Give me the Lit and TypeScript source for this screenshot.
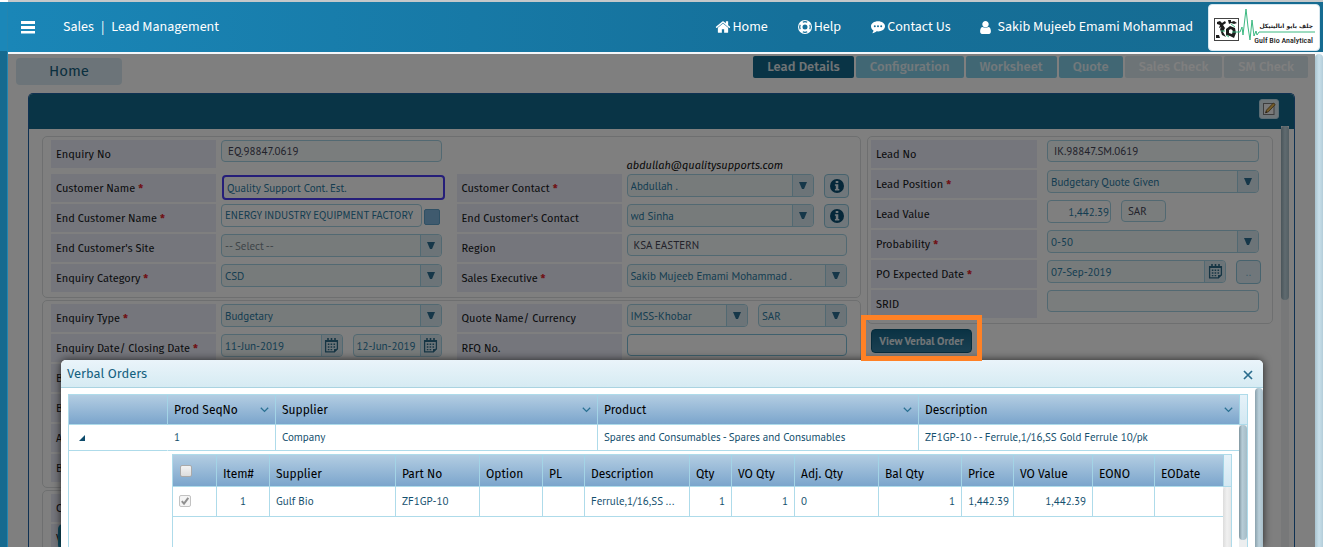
import { LitElement, html, css, nothing } from "lit";
import { customElement } from "lit/decorators.js";
import { classMap } from "lit/directives/class-map.js";

const icons = {
  home: html`<svg class="ico" viewBox="0 0 1792 1792" width="16" height="16" aria-hidden="true"><path fill="currentColor" d="M1472 992v480q0 26-19 45t-45 19h-384v-384h-256v384h-384q-26 0-45-19t-19-45v-480q0-1 .5-3t.5-3l575-474 575 474q1 2 1 6zm223-69l-62 74q-8 9-21 11h-3q-13 0-21-7l-692-577-692 577q-12 8-24 7-13-2-21-11l-62-74q-8-10-7-23.500t11-21.500l719-599q32-26 76-26t76 26l244 204v-195q0-14 9-23t23-9h192q14 0 23 9t9 23v408l219 182q10 8 11 21.500t-7 23.500z"/></svg>`,
  help: html`<svg class="ico" viewBox="0 0 16 16" width="16" height="16" aria-hidden="true"><path fill="currentColor" fill-rule="evenodd" d="M8 1a7 7 0 1 0 0 14A7 7 0 0 0 8 1zm0 4.500a2.500 2.500 0 1 1 0 5 2.500 2.500 0 0 1 0-5z"/><g fill="none" stroke="#14709a" stroke-width="1.200"><path d="M5.800 3.200a5.200 5.200 0 0 1 4.400 0M5.800 12.800a5.200 5.200 0 0 0 4.400 0M3.200 5.800a5.200 5.200 0 0 0 0 4.400M12.800 5.800a5.200 5.200 0 0 1 0 4.400"/></g></svg>`,
  chat: html`<svg class="ico" viewBox="0 0 16 16" width="16" height="16" aria-hidden="true"><path fill="currentColor" d="M8 2.200c4 0 7 2.200 7 5.100s-3 5.100-7 5.100c-.5 0-1 0-1.400-.1-1.200 1.100-2.700 1.800-4.400 1.900.7-.7 1.200-1.600 1.300-2.700C2 10.600 1 9.100 1 7.300c0-2.900 3-5.100 7-5.100z"/><g fill="#14709a"><circle cx="4.800" cy="7.300" r="1"/><circle cx="8" cy="7.300" r="1"/><circle cx="11.200" cy="7.300" r="1"/></g></svg>`,
  user: html`<svg class="ico" viewBox="0 0 1280 1792" width="11" height="15" aria-hidden="true"><path fill="currentColor" d="M1280 1399q0 109-62.500 187t-150.500 78h-854q-88 0-150.500-78t-62.500-187q0-85 8.500-160.500t31.500-152 58.500-131 94-89 134.500-34.500q131 128 313 128t313-128q76 0 134.500 34.500t94 89 58.500 131 31.500 152 8.500 160.500zm-256-887q0 159-112.500 271.500t-271.500 112.500-271.500-112.500-112.500-271.500 112.500-271.500 271.500-112.500 271.500 112.500 112.500 271.500z"/></svg>`,
  bars: html`<svg class="ico" viewBox="0 0 14 13" width="14" height="13" aria-hidden="true"><path fill="currentColor" d="M0 0h14v3H0zM0 5h14v3H0zM0 10h14v2.500H0z"/></svg>`,
  info: html`<svg viewBox="0 0 14 14" width="14" height="14" aria-hidden="true"><circle cx="7" cy="7" r="7" fill="#0b4f72"/><path fill="#e4f1f8" d="M5.700 2h2.600v2.100H5.700zM4.900 5.300h3.400v4.800h1v1.500H4.900v-1.500h.9V6.800h-.9z"/></svg>`,
  calendar: html`<svg viewBox="0 0 15 15" width="15" height="15" aria-hidden="true"><path fill="none" stroke="#2c6a88" stroke-width="1.300" d="M1.600 2.600h11.800v8.200l-3 3H1.600z"/><path fill="#2c6a88" d="M1 2h13v2H1zM3.200 0h1.600v3H3.200zM6.700 0h1.600v3H6.700zM10.200 0h1.600v3h-1.600zM3.800 5.500h1.600v1.600H3.800zM6.600 5.500h1.600v1.600H6.600zM9.500 5.500h1.600v1.600H9.500zM3.800 8.200h1.600v1.600H3.800zM6.600 8.200h1.600v1.600H6.600zM9.500 8.200h1.600v1.600H9.500zM3.800 10.900h1.600v1.400H3.800zM6.600 10.900h1.600v1.400H6.600zM10 14.200v-3.200h4z"/></svg>`,
  arrow: html`<svg viewBox="0 0 8 7" width="8" height="7" aria-hidden="true"><path fill="#2c6f92" d="M0 0h8L5 7H3z"/></svg>`,
  chevron: html`<svg viewBox="0 0 9 6" width="9" height="6" aria-hidden="true"><path fill="none" stroke="#2a7193" stroke-width="1.300" d="M.8.8l3.700 3.600L8.200.8"/></svg>`,
  close: html`<svg viewBox="0 0 10 10" width="10" height="10" aria-hidden="true"><path stroke="#2a6c8d" stroke-width="1.700" d="M1 1l8 8M9 1L1 9"/></svg>`,
  edit: html`<svg viewBox="0 0 14 14" width="14" height="14" aria-hidden="true"><rect x="1.500" y="1.500" width="10.500" height="11" fill="#f4f4f4" stroke="#7b7b7b"/><path d="M3.500 10.800l1-2.700L11.300 1l1.900 1.600-6.800 7.200z" fill="#e8b850" stroke="#6b5228" stroke-width=".8"/><path d="M3.500 10.800l.6-1.500 1 .9z" fill="#222"/></svg>`,
};

@customElement("brand-logo")
export class BrandLogo extends LitElement {
  static styles = css`
    :host { display: block; width: 112px; height: 47px; background: #fff; border: 1px solid #d5e6ee; border-radius: 4px; box-sizing: border-box; }
    svg { display: block; width: 110px; height: 45px; }
    .en { font: 500 8px "Roboto Condensed", "Liberation Sans", sans-serif; fill: #222; }
    .ar { font: 700 6px "DejaVu Sans", sans-serif; fill: #222; }
  `;
  render() {
    return html`<svg viewBox="0 0 110 45" role="img" aria-label="Gulf Bio Analytical">
      <rect x="5.500" y="13.500" width="24" height="22" fill="#fff" stroke="#444"/>
      <path fill="#1c1c1c" d="M8 17l3-1 2 2 3-2 1 2-3 2-1 2-3 1 1-3-3-1zM19 15h3v2l3-1 3 2-3 1-3-1-2 1zM11 24l3-4 2 3-2 4 3 5-4-2zM17 24l4-3 5 2 1 5-2 5-4-2-4-1zM7 30l3 0 1 3H7z"/>
      <path fill="#fff" d="M20 25l2-1 2 2-1 3-3-1z"/>
      <path fill="none" stroke="#3db982" d="M12 26h4M22 19l4 3M17 30l3 2M23 27h8l2-5 1 8 3-26 2 18 2 13 2-20 2 16 2-5 1 4 2-3h56"/>
      <text class="ar" x="104" y="23" text-anchor="end">جلف بايو اناليتيكل</text>
      <text class="en" x="104" y="38" text-anchor="end">Gulf Bio Analytical</text>
    </svg>`;
  }
}

type Col = { t: string; w: number; sort?: boolean; num?: boolean };

const ORDER_COLS: Col[] = [
  { t: "", w: 98 },
  { t: "Prod SeqNo", w: 108, sort: true },
  { t: "Supplier", w: 322, sort: true },
  { t: "Product", w: 321, sort: true },
  { t: "Description", w: 321, sort: true },
];

const ITEM_COLS: Col[] = [
  { t: "Item#", w: 53 }, { t: "Supplier", w: 126 }, { t: "Part No", w: 84 },
  { t: "Option", w: 63 }, { t: "PL", w: 42 }, { t: "Description", w: 105 },
  { t: "Qty", w: 42, num: true }, { t: "VO Qty", w: 63, num: true }, { t: "Adj. Qty", w: 84 },
  { t: "Bal Qty", w: 83, num: true }, { t: "Price", w: 52, num: true }, { t: "VO Value", w: 79, num: true },
  { t: "EONO", w: 62 }, { t: "EODate", w: 69 },
];

const ITEM = ["1", "Gulf Bio", "ZF1GP-10", "", "", "Ferrule,1/16,SS ...", "1", "1", "0", "1", "1,442.39", "1,442.39", "", ""];

@customElement("verbal-orders")
export class VerbalOrders extends LitElement {
  static styles = css`
    :host { display: flex; flex-direction: column; background: #fff; border-radius: 5px 5px 0 0; box-shadow: 0 0 8px rgba(0, 0, 0, .7); overflow: hidden; font: 11px/14px "PT Sans", "Lato", sans-serif; color: #14506e; }
    * { box-sizing: border-box; }
    .title { flex: none; display: flex; align-items: center; justify-content: space-between; height: 28px; padding: 0 10px 0 6px; background: linear-gradient(#eaf4fa, #d6ebf3); border-bottom: 1px solid #a9d3e1; }
    h2 { margin: 0; font: 400 13px/16px "Fira Sans", "Lato", sans-serif; color: #14607f; }
    button { border: 0; padding: 0; background: none; display: inline-flex; align-items: center; }
    .close { margin-top: 3px; }
    .body { flex: 1; display: flex; gap: 7px; padding-left: 7px; }
    .grid { flex: 1; display: flex; border: 1px solid #aedbea; border-width: 1px 0 0 1px; }
    .outer { margin-top: 6px; }
    table { flex: 1; width: 100%; table-layout: fixed; border-spacing: 0; align-self: flex-start; }
    th { height: 30px; padding: 0 6px; text-align: left; font: 400 12px/14px "Fira Sans", "Lato", sans-serif; color: #000; background: linear-gradient(#b3cde2, #7ba5cc); border-bottom: 1px solid #aedbea; white-space: nowrap; }
    th + th { border-left: 1px solid #a3d4e6; }
    .head { display: flex; justify-content: space-between; align-items: center; }
    td { height: 26px; padding: 0 6px 2px; border-bottom: 1px solid #aedbea; white-space: nowrap; overflow: hidden; }
    td + td { border-left: 1px solid #aedbea; }
    .outer > table > tbody > tr > .seq { border-left-color: transparent; }
    .toggle { margin-left: 4px; }
    .detail { height: auto; padding: 3px 7px 0 103px; border: 0; overflow: visible; vertical-align: top; }
    .inner { height: 120px; }
    .inner th { height: 32px; padding: 7px 6px 0; }
    .inner td { height: 30px; }
    .inner .num { text-align: right; }
    .inner .item { text-align: center; }
    .inner .tight { padding-right: 4px; }
    .rail { width: 9px; flex: none; display: flex; flex-direction: column; border-right: 1px solid #aedbea; background: #eceeef; }
    .cap { height: 30px; background: linear-gradient(#e6f2f9, #d3e8f2); border-left: 1px solid #a3d4e6; border-bottom: 1px solid #aedbea; }
    .inner .cap { height: 32px; }
    .thumb { height: 115px; border-radius: 4px; background: linear-gradient(90deg, #7f959f, #b7cdd7 40%, #a5bcc6); }
    .idle { flex: 1; border-radius: 4px 4px 0 0; background: linear-gradient(90deg, #dcdcdc, #f0f0f0 50%, #e6e6e6); }
    .page-thumb { width: 8px; flex: none; border-radius: 4px 4px 0 0; background: linear-gradient(90deg, #8ba2ad, #bacfd9 50%, #a9bfca); }
    input { appearance: none; display: block; width: 12px; height: 12px; margin: 0 0 0 1px; border: 1px solid #aaa; border-radius: 2px; background: linear-gradient(#f3f3f3, #ddd); }
    th input { margin-top: -6px; }
    input:checked { margin-left: 0; border-color: #c2c2c2; background: #f4f4f4 url("data:image/svg+xml,%3Csvg xmlns='http://www.w3.org/2000/svg' viewBox='0 0 10 10'%3E%3Cpath d='M1.800 5.200l2.200 2.500L8.300 1.800' fill='none' stroke='%23909090' stroke-width='2'/%3E%3C/svg%3E"); }
  `;
  cols(list: Col[]) {
    const sum = list.reduce((a, c) => a + c.w, 0);
    return html`<colgroup>${list.map((c) => html`<col style="width:${(c.w / sum) * 100}%">`)}</colgroup>`;
  }
  render() {
    return html`
      <div class="title"><h2>Verbal Orders</h2><button class="close" aria-label="Close">${icons.close}</button></div>
      <div class="body">
        <div class="grid outer">
          <table>
            ${this.cols(ORDER_COLS)}
            <thead><tr>${ORDER_COLS.map((c) => html`<th><div class="head">${c.t}${c.sort ? icons.chevron : nothing}</div></th>`)}</tr></thead>
            <tbody>
              <tr>
                <td><button class="toggle" aria-label="Collapse row"><svg viewBox="0 0 6 6" width="6" height="6"><path fill="#0d4a6b" d="M6 0v6H0z"/></svg></button></td>
                <td class="seq">1</td>
                <td>Company</td>
                <td>Spares and Consumables - Spares and Consumables</td>
                <td>ZF1GP-10 - - Ferrule,1/16,SS Gold Ferrule 10/pk</td>
              </tr>
              <tr><td class="detail" colspan="5">${this.items()}</td></tr>
            </tbody>
          </table>
          <div class="rail"><div class="cap"></div><div class="thumb"></div></div>
        </div>
        <div class="page-thumb"></div>
      </div>`;
  }
  items() {
    return html`<div class="grid inner">
      <table>
        ${this.cols([{ t: "", w: 43 }, ...ITEM_COLS])}
        <thead><tr><th><input type="checkbox" aria-label="Select all"></th>${ITEM_COLS.map((c) => html`<th>${c.t}</th>`)}</tr></thead>
        <tbody><tr><td><input type="checkbox" checked disabled aria-label="Select item 1"></td>
          ${ITEM.map((v, i) => html`<td class=${classMap({ num: !!ITEM_COLS[i].num, item: i === 0, tight: ITEM_COLS[i].t === "Price" })}>${v}</td>`)}</tr></tbody>
      </table>
      <div class="rail"><div class="cap"></div><div class="idle"></div></div>
    </div>`;
  }
}

@customElement("app-root")
export class AppRoot extends LitElement {
  static styles = css`
    :host { display: flex; position: relative; height: 100vh; overflow: hidden; background: #fff; font: 11px/14px "PT Sans", "Lato", sans-serif; color: #2b7ba3; }
    * { box-sizing: border-box; }
    button { font: inherit; padding: 0; cursor: pointer; }
    .side { width: 8px; flex: none; margin-top: 2px; background: #166a8f; border-right: 1px solid #2385b0; }
    .side::before { content: ""; display: block; height: 49px; background: #1b87b8; }
    .page { flex: 1; min-width: 0; display: flex; flex-direction: column; }
    header { flex: none; display: flex; align-items: center; height: 54px; padding: 0 3px 0 13px; border-top: 2px solid #c4c8ca; border-bottom: 2px solid #f4f7fa; background: linear-gradient(90deg, #1a86b7, #15709a 60%, #166b91); color: #fff; font: 400 14px/18px "Source Sans 3", "Open Sans", sans-serif; }
    header a { color: inherit; text-decoration: none; display: inline-flex; align-items: center; gap: 1px; }
    .menu { display: inline-flex; border: 0; background: none; color: #fff; margin-right: 28px; }
    .crumb { display: flex; gap: 7px; flex: 1; }
    nav.top { display: flex; gap: 29px; align-items: center; margin-right: 15px; }
    nav.top .who { gap: 7px; }
    .ico { display: block; flex: none; }
    .below { flex: 1; min-height: 0; display: flex; }
    main { flex: 1; min-width: 0; display: flex; flex-direction: column; }
    .shade { position: absolute; inset: 54px 8px 0 8px; background: rgba(0, 0, 0, .5); z-index: 2; }
    .win-rail { width: 8px; flex: none; border-radius: 4px 4px 0 0; background: linear-gradient(90deg, #a9c4d0, #c8dfea 50%, #b3cdd9); }
    .tabs { flex: none; display: flex; justify-content: space-between; align-items: flex-start; height: 39px; padding: 2px 7px 0 8px; }
    .home { display: block; width: 106px; height: 27px; margin-top: 2px; border-radius: 4px; background: #d9e9f2; color: #17607f; text-decoration: none; text-align: center; font: 400 15px/27px "Fira Sans", "Lato", sans-serif; }
    .steps { display: flex; gap: 2px; }
    .steps button { height: 22px; padding: 0 14px; border: 0; border-radius: 2px; background: #83cfe9; color: #e6f2f7; font: 500 13px/22px "Fira Sans", "Lato", sans-serif; }
    .steps .on { background: #12688c; color: #e2e9ec; }
    .steps .off { background: #dbe8ee; color: #fff; }
    .panel { flex: 1; min-height: 0; margin: 0 20px; border: 1px solid #1f62a4; border-bottom: 0; border-radius: 5px 5px 0 0; display: flex; flex-direction: column; }
    .panel-head { flex: none; height: 35px; padding: 5px 15px 0; display: flex; justify-content: flex-end; align-items: flex-start; background: #12688c; border-radius: 4px 4px 0 0; }
    .edit { width: 20px; height: 20px; display: grid; place-items: center; border: 1px solid #b8dbe9; border-radius: 3px; background: #dcecf3; }
    .panel-body { flex: 1; min-height: 0; display: flex; padding: 0 5px 0 13px; }
    .form { flex: 1; min-width: 0; display: grid; grid-template-columns: 819fr 406fr; gap: 6px; align-items: start; padding-top: 7px; margin-right: 8px; }
    .rail { width: 8px; flex: none; margin-top: -3px; background: #eef1f3; }
    .rail div { height: 174px; border-radius: 4px; background: linear-gradient(90deg, #93aab5, #c0d5df 50%, #a7bdc8); }
    .stack { display: flex; flex-direction: column; gap: 2px; min-width: 0; }
    .box { border: 1px solid #dcdfe0; border-radius: 5px; padding: 3px 13px 5px 8px; display: grid; grid-template-columns: 1fr 1fr; gap: 15px; }
    .box.one { grid-template-columns: 1fr; padding-left: 3px; }
    .row { display: grid; grid-template-columns: 165px minmax(0, 1fr); gap: 5px; height: 28px; }
    .one .row { grid-template-columns: 166px minmax(0, 1fr); gap: 10px; }
    .row > label { display: block; background: #ebecf9; padding: 7px 5px 0; color: #16191b; font: 400 11px/16px "Fira Sans", "Lato", sans-serif; white-space: nowrap; }
    .row b { color: #e0252c; }
    .first { margin-bottom: 4px; }
    .mail { height: 32px; padding: 18px 0 0 170px; color: #111; font: italic 400 11px/16px "Fira Sans", "Lato", sans-serif; }
    .ctl { display: flex; align-items: flex-start; gap: 10px; min-width: 0; }
    input, select { width: 100%; min-width: 0; flex: 1; height: 22px; margin: 0; padding: 0 3px; border: 1px solid #a5d3e4; border-radius: 4px; background: #fff; color: inherit; font: inherit; outline: 0; }
    select { padding: 0; }
    .ro { background: #f4fafb; color: #445; padding: 0 6px; }
    .focus { flex: none; width: calc(100% + 2px); height: 25px; margin: 1px -3px 0 1px; border: 2px solid #4a3df2; }
    .long { font-family: "Source Sans 3", "PT Sans", sans-serif; height: 23px; }
    .blank { border-color: #7fc0da; }
    .narrow { flex: 0 0 64px; text-align: right; padding: 0 1px; height: 23px; }
    .cur { flex: 0 0 45px; }
    .combo { flex: 1; min-width: 0; height: 23px; display: grid; grid-template-columns: minmax(0, 1fr) 21px; border: 1px solid #a5d3e4; border-radius: 4px; background: #eef6f7; overflow: hidden; }
    .combo > select { grid-area: 1 / 1 / 2 / 3; appearance: none; border: 0; height: 21px; background: none; opacity: 1; padding: 0 22px 0 3px; }
    .combo > input { border: 0; height: 21px; background: none; padding-right: 0; }
    .cap { display: grid; place-items: center; border: 0; border-left: 1px solid #a5d3e4; background: #d8e9f1; pointer-events: none; }
    .combo > .cap { grid-area: 1 / 2; }
    .w88 { flex: 0 0 89px; }
    .muted { color: #7d8b91; }
    .square { flex: none; width: 25px; height: 24px; margin-right: -2px; display: grid; place-items: center; border: 1px solid #8ec6dd; border-radius: 4px; background: #e0eff6; color: #7fbcd6; }
    .pick { flex: none; width: 16px; height: 16px; margin: 5px 2px 0 -8px; border: 1px solid #5fa0c9; border-radius: 2px; background: #7fb4dc; }
    .tail { position: relative; }
    .tail button { position: absolute; left: 7px; top: 0; width: 90px; height: 26px; border: 0; border-radius: 5px; background: #1c93b8; }
    .action { position: relative; align-self: flex-start; margin: 3px 0 0 4px; }
    .view { display: block; width: 101px; height: 24px; border: 1px solid #0d5878; border-radius: 4px; background: linear-gradient(#156588, #3580a4); color: #e2eaee; font: 700 11px/20px "PT Sans", "Lato", sans-serif; white-space: nowrap; }
    .mark { position: absolute; inset: -14px -10px -8px; border: 5px solid #ff8125; z-index: 4; pointer-events: none; }
    verbal-orders { position: absolute; left: 61px; right: 60px; top: 360px; bottom: 0; z-index: 3; }
  `;

  row(id: string, label: string, req: boolean, control: unknown, first = false) {
    return html`<div class=${classMap({ row: true, first })}><label for=${id}>${label}${req ? html` <b>*</b>` : nothing}</label><div class="ctl">${control}</div></div>`;
  }
  select(id: string, value: string, cls = "") {
    return html`<div class="combo ${cls}"><select id=${id}><option>${value}</option></select><span class="cap">${icons.arrow}</span></div>`;
  }
  date(id: string, value: string, cls = "") {
    return html`<div class="combo ${cls}"><input id=${id} aria-label="Date" .value=${value}><button class="cap" aria-label="Open calendar">${icons.calendar}</button></div>`;
  }
  infoButton() {
    return html`<button class="square" aria-label="Contact details">${icons.info}</button>`;
  }

  render() {
    return html`
      <div class="side"></div>
      <div class="page">
        <header>
          <button class="menu" aria-label="Menu">${icons.bars}</button>
          <div class="crumb"><span>Sales</span><span>|</span><span>Lead Management</span></div>
          <nav class="top">
            <a href="#">${icons.home}Home</a>
            <a href="#">${icons.help}Help</a>
            <a href="#">${icons.chat}Contact Us</a>
            <a href="#" class="who">${icons.user}Sakib Mujeeb Emami Mohammad</a>
          </nav>
          <brand-logo></brand-logo>
        </header>
        <div class="below">
          <main>
            <div class="tabs">
              <a class="home" href="#">Home</a>
              <div class="steps">
                <button class="on">Lead Details</button><button>Configuration</button><button>Worksheet</button><button>Quote</button><button class="off">Sales Check</button><button class="off">SM Check</button>
              </div>
            </div>
            <section class="panel">
              <div class="panel-head"><button class="edit" aria-label="Edit">${icons.edit}</button></div>
              <div class="panel-body">
                <div class="form">
                  <div class="stack">${this.customer()}${this.enquiry()}${this.more()}</div>
                  <div class="stack">
                    ${this.lead()}
                    <div class="action"><button class="view">View Verbal Order</button><div class="mark"></div></div>
                  </div>
                </div>
                <div class="rail"><div></div></div>
              </div>
            </section>
          </main>
          <div class="win-rail"></div>
        </div>
      </div>
      <div class="shade"></div>
      <verbal-orders role="dialog" aria-label="Verbal Orders"></verbal-orders>`;
  }

  customer() {
    return html`<div class="box">
      <div class="stack">
        ${this.row("enq", "Enquiry No", false, html`<input id="enq" class="ro" readonly value="EQ.98847.0619">`, true)}
        ${this.row("cust", "Customer Name", true, html`<input id="cust" class="focus" value="Quality Support Cont. Est.">`)}
        ${this.row("end", "End Customer Name", true, html`<input id="end" class="long" value="ENERGY INDUSTRY EQUIPMENT FACTORY"><button class="pick" aria-label="Pick customer"></button>`)}
        ${this.row("site", "End Customer's Site", false, this.select("site", "-- Select --", "muted"))}
        ${this.row("cat", "Enquiry Category", true, this.select("cat", "CSD"))}
      </div>
      <div class="stack">
        <div class="mail">abdullah@qualitysupports.com</div>
        ${this.row("cc", "Customer Contact", true, html`${this.select("cc", "Abdullah .")}${this.infoButton()}`)}
        ${this.row("ec", "End Customer's Contact", false, html`${this.select("ec", "wd Sinha")}${this.infoButton()}`)}
        ${this.row("reg", "Region", false, html`<input id="reg" class="ro" readonly value="KSA EASTERN">`)}
        ${this.row("exec", "Sales Executive", true, this.select("exec", "Sakib Mujeeb Emami Mohammad ."))}
      </div>
    </div>`;
  }

  enquiry() {
    return html`<div class="box">
      <div class="stack">
        ${this.row("type", "Enquiry Type", true, this.select("type", "Budgetary"))}
        ${this.row("d1", "Enquiry Date/ Closing Date", true, html`${this.date("d1", "11-Jun-2019")}${this.date("d2", "12-Jun-2019", "w88")}`)}
        ${["B", "B", "A", "B"].map((t, i) => this.row("x" + i, t, false, nothing))}
      </div>
      <div class="stack">
        ${this.row("qn", "Quote Name/ Currency", false, html`${this.select("qn", "IMSS-Khobar")}${this.select("qc", "SAR", "w88")}`)}
        ${this.row("rfq", "RFQ No.", false, html`<input id="rfq" class="blank">`)}
      </div>
    </div>`;
  }

  more() {
    return html`<div class="box">
      <div class="stack">
        ${this.row("y0", "C", false, nothing)}
        <div class="tail">${this.row("y1", "V", false, nothing)}<button aria-label="View"></button></div>
      </div>
    </div>`;
  }

  lead() {
    return html`<div class="box one"><div class="stack">
      ${this.row("ln", "Lead No", false, html`<input id="ln" class="ro" readonly value="IK.98847.SM.0619">`)}
      ${this.row("lp", "Lead Position", true, this.select("lp", "Budgetary Quote Given"))}
      ${this.row("lv", "Lead Value", false, html`<input id="lv" class="narrow" value="1,442.39"><input class="ro cur" aria-label="Currency" readonly value="SAR">`)}
      ${this.row("pr", "Probability", true, this.select("pr", "0-50"))}
      ${this.row("po", "PO Expected Date", true, html`${this.date("po", "07-Sep-2019")}<button class="square" aria-label="More dates">..</button>`)}
      ${this.row("sr", "SRID", false, html`<input id="sr" class="ro" readonly>`)}
    </div></div>`;
  }
}
